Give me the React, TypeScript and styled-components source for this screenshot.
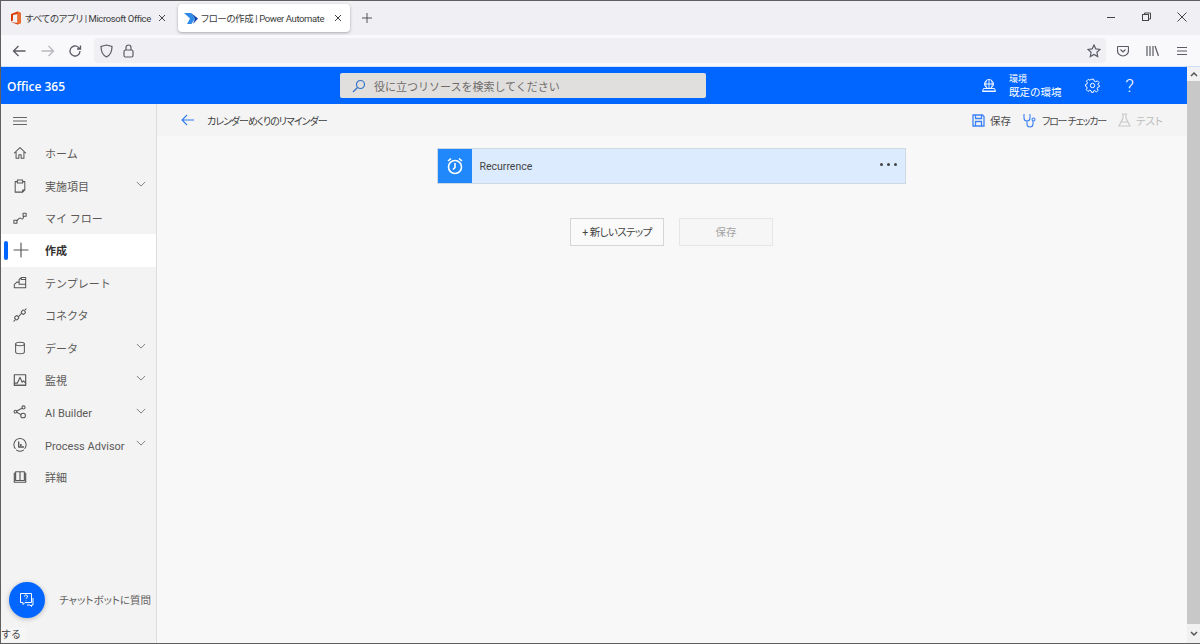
import React from "react";
import styled, { createGlobalStyle } from "styled-components";

const JP = `Roboto, "Noto Sans CJK JP", sans-serif`;

const Global = createGlobalStyle`
  html, body { margin: 0; padding: 0; height: 100%; overflow: hidden; }
  body { font-family: ${JP}; }
  * { box-sizing: border-box; }
  svg { flex: none; }
`;

const Win = styled.div`
  width: 1200px; height: 644px; display: flex; flex-direction: column;
  border-top: 1px solid #5f5f5f; border-left: 1px solid #5f5f5f; border-bottom: 1px solid #5f5f5f;
  background: #f8f8f8; overflow: hidden; position: relative; font-family: ${JP};
`;
const TabStrip = styled.div`
  height: 34px; flex: none; background: #f0f0f4; display: flex; align-items: flex-start; padding: 3px 0 0 0;
`;
const Tab = styled.div<{ $active?: boolean }>`
  height: 28px; width: ${(p) => (p.$active ? 172 : 177)}px; flex: none; display: flex; align-items: center;
  padding: 0 ${(p) => (p.$active ? 7 : 11)}px 0 ${(p) => (p.$active ? 6 : 9)}px;
  border-radius: 4px; background: ${(p) => (p.$active ? "#fff" : "transparent")};
  box-shadow: ${(p) => (p.$active ? "0 1px 3px rgba(0,0,0,.3)" : "none")};
  font-size: 9.5px; color: #3c3c3c;
`;
const TabTitle = styled.span`
  flex: 1; min-width: 0; margin-left: 3px; white-space: nowrap; letter-spacing: -0.4px; font-feature-settings: "palt";
`;
const WinBtns = styled.div`margin-left: auto; display: flex; align-items: center; height: 26px; gap: 24px; padding-right: 12px;`;
const PlusBtn = styled.div`width: 34px; height: 28px; display: flex; align-items: center; justify-content: center; color: #555;`;
const Toolbar = styled.div`
  height: 31px; flex: none; background: #f9f9fb; display: flex; align-items: center; padding-left: 11px; color: #5b5b66;
  border-bottom: 1px solid #cfe0fb; box-sizing: content-box;
`;
const NavGroup = styled.div`display: flex; gap: 13px; align-items: center; width: 82px;`;
const UrlBar = styled.div`
  width: 1012px; height: 25px; background: #f0f0f4; border-radius: 4px; display: flex; align-items: center;
  padding: 0 5px 0 6px; gap: 10px;
`;
const RightTools = styled.div`display: flex; align-items: center; gap: 17px; margin-left: 11px;`;
const Spacer = styled.div`flex: 1;`;
const Body = styled.div`flex: 1; display: flex; min-height: 0;`;
const Page = styled.div`flex: 1; display: flex; flex-direction: column; min-width: 0;`;
const Scrollbar = styled.div`
  width: 13px; flex: none; background: #f1f1f1; display: flex; flex-direction: column;
`;
const ScrollBtn = styled.div<{ $h: number }>`
  height: ${(p) => p.$h}px; flex: none; display: flex; align-items: center; justify-content: center;
`;
const ScrollTrack = styled.div`flex: 1; background: #c8c8c8;`;
const Header = styled.div`
  height: 37px; flex: none; background: #0066ff; color: #fff; display: flex; align-items: center; position: relative;
`;
const Brand = styled.div`
  width: 339px; padding: 2px 0 0 6px; font-size: 12px; font-weight: 600; font-family: "Open Sans", sans-serif;
`;
const Search = styled.div`
  width: 366px; height: 25px; background: #e1dfdd; border-radius: 2px; display: flex; align-items: center; padding: 0 0 0 12px;
  color: #6f6c6a; font-size: 11px; gap: 8px;
`;
const EnvIcon = styled.div`margin-left: 276px; display: flex; align-items: center;`;
const Env = styled.div`margin-left: 13px; display: flex; flex-direction: column; line-height: 13px; width: 65px;`;
const EnvLabel = styled.span`font-size: 9px;`;
const EnvName = styled.span`font-size: 10.5px;`;
const HeadIcon = styled.div`width: 37px; display: flex; justify-content: center; font-size: 19px; font-weight: 300; margin-top: -1px;`;
const Main = styled.div`flex: 1; display: flex; min-height: 0;`;
const Sidebar = styled.nav`
  width: 156px; flex: none; background: #f3f3f3; border-right: 1px solid #dddddd; display: flex; flex-direction: column; position: relative;
`;
const Burger = styled.div`height: 33px; display: flex; align-items: center; padding-left: 12px; color: #666;`;
const Item = styled.div<{ $active?: boolean }>`
  height: 32.4px; flex: none; display: flex; align-items: center; position: relative; padding-left: 12px;
  background: ${(p) => (p.$active ? "#fff" : "transparent")};
  color: ${(p) => (p.$active ? "#323130" : "#5c5a58")};
  font-size: 11px; font-weight: ${(p) => (p.$active ? 700 : 400)};
`;
const ActiveMark = styled.span`position: absolute; left: 3px; top: 7px; width: 4px; height: 19px; border-radius: 2px; background: #0066ff;`;
const ItemIcon = styled.span`width: 32px; flex: none; display: flex; align-items: center; color: #555;`;
const ItemLabel = styled.span<{ $latin?: boolean }>`
  flex: 1; white-space: nowrap; margin-top: ${(p) => (p.$latin ? 3 : 0)}px;
`;
const Chevron = styled.span`width: 20px; flex: none; color: #777; display: flex; margin-top: -3px;`;
const ChatFab = styled.div`
  position: absolute; left: 8px; top: 478px; width: 36px; height: 36px; border-radius: 50%; background: #0066ff;
  box-shadow: 0 1px 5px rgba(0,0,0,.25); display: flex; align-items: center; justify-content: center;
`;
const ChatLabel = styled.div`
  position: absolute; left: 58px; top: 490px; font-size: 10.5px; line-height: 14px; color: #605e5c; white-space: nowrap; font-feature-settings: "palt";
`;
const Status = styled.div`position: absolute; left: 0; top: 524px; padding-right: 5px; background: #f6f6f6; font-size: 10px; color: #444; line-height: 14px;`;
const Content = styled.div`flex: 1; display: flex; flex-direction: column; min-width: 0; background: #f8f8f8;`;
const CommandBar = styled.div`
  height: 32px; flex: none; background: #f4f4f4; display: flex; align-items: center; padding: 0 12px 0 24px; color: #444; font-size: 10px;
`;
const FlowTitle = styled.span`margin-left: 12px; color: #3f3f3f; font-size: 10px; letter-spacing: -1px; font-feature-settings: "palt";`;
const Cmd = styled.div<{ $disabled?: boolean; $tight?: boolean }>`
  display: flex; align-items: center; gap: 5px; color: ${(p) => (p.$disabled ? "#bdbdbd" : "#4a4a4a")};
  margin-right: 12px; font-size: ${(p) => (p.$tight ? 10 : 10.5)}px; letter-spacing: ${(p) => (p.$tight ? -1.2 : 0)}px;
  font-feature-settings: "palt";
`;
const Canvas = styled.div`flex: 1; display: flex; flex-direction: column; align-items: center; padding-top: 12px;`;
const Card = styled.div`
  width: 469px; height: 36px; background: #dcebfd; border: 1px solid #cfd9e4; display: flex; align-items: center; margin-right: 2px;
`;
const CardIcon = styled.div`width: 34px; height: 34px; background: #2088fa; display: flex; align-items: center; justify-content: center;`;
const CardTitle = styled.span`margin-left: 8px; flex: 1; font-size: 10.5px; color: #444;`;
const Dots = styled.div`display: flex; gap: 4px; padding-right: 8px; margin-top: -4px;`;
const Dot = styled.i`width: 3px; height: 3px; border-radius: 50%; background: #444; display: block;`;
const Actions = styled.div`display: flex; gap: 15px; margin-top: 34px; margin-right: 1px;`;
const Btn = styled.div<{ $disabled?: boolean; $tight?: boolean }>`
  width: 94px; height: 28px; display: flex; align-items: center; justify-content: center; font-size: 10.5px; padding-bottom: 2px;
  font-feature-settings: "palt"; letter-spacing: ${(p) => (p.$tight ? -0.6 : 0)}px;
  border: 1px solid ${(p) => (p.$disabled ? "#e6e6e6" : "#d6d6d6")};
  color: ${(p) => (p.$disabled ? "#a3a3a3" : "#444")}; background: ${(p) => (p.$disabled ? "#f6f6f6" : "#fafafa")};
`;

const Svg: React.FC<React.PropsWithChildren<{ s?: number; c?: string; w?: number }>> = ({ s = 14, c = "currentColor", w = 1.15, children }) => (
  <svg width={s} height={s} viewBox="0 0 16 16" fill="none" stroke={c} strokeWidth={w} strokeLinecap="round" strokeLinejoin="round">{children}</svg>
);
const Home = () => <Svg><path d="M1.500 8 8 1.800 14.500 8M3.500 6.500v7.500h3.200V10h2.600v4h3.200V6.500" /></Svg>;
const Clip = () => <Svg><path d="M4.500 3H2.500v12h8.500l2.500-2.500V3h-2M5 1.200h6V4.500H5zM11 15v-2.500h2.500" /></Svg>;
const Flow = () => <Svg><rect x="1" y="10.500" width="3.500" height="3.500" /><rect x="11.500" y="2.500" width="3.500" height="3.500" /><path d="M4.500 11 7 8.500a1.500 1.500 0 0 1 2 0l.5.3a1.500 1.500 0 0 0 2-.3l.8-2.500" /></Svg>;
const Plus = () => <Svg s={16}><path d="M8 1v14M1 8h14" /></Svg>;
const Tpl = () => <Svg><path d="M1.500 9.500 4.500 7H7V4l2.500-2.200H14.500V13.500H1.500zM7 7v2.500M7 9.500h7.500M9.500 1.800V4H14.500" /></Svg>;
const Conn = () => <Svg><rect x="2.200" y="9.200" width="4" height="4" rx="1" transform="rotate(-45 4.200 11.200)" /><rect x="9.800" y="2.800" width="4" height="4" rx="1" transform="rotate(-45 11.800 4.800)" /><path d="M6.200 9.800 9.800 6.200M1 15l1.500-1.500M15 1l-1.200 1.200" /></Svg>;
const Data = () => <Svg><ellipse cx="8" cy="3.500" rx="5" ry="2" /><path d="M3 3.500v9c0 1.100 2.200 2 5 2s5-.9 5-2v-9" /></Svg>;
const Mon = () => <Svg w={1.3}><rect x="1.500" y="2" width="13" height="12" /><path d="M1.500 11.500h3.500L8 5l2.500 5.500 1.500-1.500 2.500 2.500M1.500 14h13" /></Svg>;
const AI = () => <Svg><circle cx="2.800" cy="7.500" r="1.600" /><circle cx="12" cy="2.800" r="1.800" /><circle cx="11.500" cy="12" r="2.700" /><path d="M4.300 6.900 10.400 3.700M4.300 8.300 9 11" /></Svg>;
const PA = () => <Svg><path d="M2.500 12A7 7 0 1 1 13.500 12M4 13.800a7 7 0 0 0 8 0" /><path d="M6.500 4.500v5.800h5.500" strokeWidth="1.500" /><circle cx="9" cy="8" r=".6" /></Svg>;
const Book = () => <Svg w={1.3}><path d="M3 2h5v10H3zM8 2h5v10H8zM1.500 3.500V14h13V3.500" /></Svg>;
const Chev = () => <svg width="10" height="10" viewBox="0 0 12 12" fill="none" stroke="currentColor" strokeWidth="1.100"><path d="M1 3.500 6 8.500l5-5" /></svg>;

const navItems: { label: string; icon: React.ReactNode; chev?: boolean; active?: boolean; latin?: boolean }[] = [
  { label: "ホーム", icon: <Home /> },
  { label: "実施項目", icon: <Clip />, chev: true },
  { label: "マイ フロー", icon: <Flow /> },
  { label: "作成", icon: <Plus />, active: true },
  { label: "テンプレート", icon: <Tpl /> },
  { label: "コネクタ", icon: <Conn /> },
  { label: "データ", icon: <Data />, chev: true },
  { label: "監視", icon: <Mon />, chev: true },
  { label: "AI Builder", icon: <AI />, chev: true, latin: true },
  { label: "Process Advisor", icon: <PA />, chev: true, latin: true },
  { label: "詳細", icon: <Book /> },
];

export default function App() {
  return (
    <Win>
      <Global />
      <TabStrip>
        <Tab>
          <svg width="12" height="14" viewBox="0 0 12 14"><path d="M1 3 7.500 0.500 11 2v10l-3.500 1.500L1 11l6.500 1V3L3 4v5.500L1 10.500z" fill="#d83b01" /><path d="M7.500.5 11 2v10l-3.500 1.500z" fill="#eb6c2f" /></svg>
          <TabTitle>すべてのアプリ | Microsoft Office</TabTitle>
          <svg width="10" height="10" viewBox="0 0 10 10" stroke="#444"><path d="M2 2l6 6M8 2 2 8" /></svg>
        </Tab>
        <Tab $active>
          <svg width="14" height="11" viewBox="0 0 14 11"><path d="M0 0h7l4 5.500L7.500 11H3l3-5.500z" fill="#2f8be8" /><path d="M7 0l7 5.500L9 11l2-5.500z" fill="#0f3fa8" /></svg>
          <TabTitle>フローの作成 | Power Automate</TabTitle>
          <svg width="10" height="10" viewBox="0 0 10 10" stroke="#444"><path d="M2 2l6 6M8 2 2 8" /></svg>
        </Tab>
        <PlusBtn><svg width="12" height="12" viewBox="0 0 12 12" stroke="#555"><path d="M6 1v10M1 6h10" /></svg></PlusBtn>
        <WinBtns>
          <svg width="10" height="10" viewBox="0 0 10 10" stroke="#444"><path d="M1 5.500h8" /></svg>
          <svg width="12" height="10" viewBox="0 0 12 10" fill="none" stroke="#444"><rect x="2.500" y="2.500" width="6" height="6" /><path d="M4.500 2.500V1h6v6H8.500" /></svg>
          <svg width="12" height="12" viewBox="0 0 12 12" stroke="#444"><path d="M1.500 1.500l9 9M10.500 1.500l-9 9" /></svg>
        </WinBtns>
      </TabStrip>
      <Toolbar>
        <NavGroup>
          <svg width="15" height="14" viewBox="0 0 15 14" fill="none" stroke="#5b5b66" strokeWidth="1.300"><path d="M13.500 7h-12M6.500 2l-5 5 5 5" /></svg>
          <svg width="15" height="14" viewBox="0 0 15 14" fill="none" stroke="#b8b8be" strokeWidth="1.300"><path d="M1.500 7h12M8.500 2l5 5-5 5" /></svg>
          <svg width="14" height="14" viewBox="0 0 14 14" fill="none" stroke="#5b5b66" strokeWidth="1.300"><path d="M12 7a5 5 0 1 1-1.500-3.600L12.500 5M12.500 1.500V5H9" /></svg>
        </NavGroup>
        <UrlBar>
          <svg width="13" height="14" viewBox="0 0 13 14" fill="none" stroke="#5b5b66" strokeWidth="1.200"><path d="M6.500 1 12 2.500c0 5-1.500 8.500-5.500 10.500C2.500 11 1 7.500 1 2.500z" /></svg>
          <svg width="11" height="14" viewBox="0 0 11 14" fill="none" stroke="#5b5b66" strokeWidth="1.200"><rect x="1" y="6" width="9" height="7" rx="1.500" /><path d="M3 6V3.500a2.500 2.500 0 0 1 5 0V6" /></svg>
          <Spacer />
          <svg width="14" height="14" viewBox="0 0 14 14" fill="none" stroke="#5b5b66" strokeWidth="1.200"><path d="M7 1l1.800 3.900 4.200.5-3.100 2.900.8 4.200L7 10.400l-3.700 2.100.8-4.200L1 5.400l4.200-.5z" /></svg>
        </UrlBar>
        <RightTools>
          <svg width="12" height="12" viewBox="0 0 12 12" fill="none" stroke="#5b5b66" strokeWidth="1.200"><path d="M1 1.500h10a.5.500 0 0 1 .5.500v3.500a5.500 5.500 0 0 1-11 0V2a.5.500 0 0 1 .5-.5z" /><path d="M3.500 4.500 6 7l2.500-2.500" /></svg>
          <svg width="13" height="12" viewBox="0 0 13 12" stroke="#5b5b66" strokeWidth="1.200"><path d="M1 1v10M4 1v10M7 1v10M9 1l3.500 10" /></svg>
          <svg width="12" height="12" viewBox="0 0 12 12" stroke="#5b5b66" strokeWidth="1.200"><path d="M1 2.500h10M1 6h10M1 9.500h10" /></svg>
        </RightTools>
      </Toolbar>
      <Body>
        <Page>
          <Header>
            <Brand>Office 365</Brand>
            <Search>
              <svg width="14" height="14" viewBox="0 0 14 14" fill="none" stroke="#2f72c8" strokeWidth="1.200"><circle cx="8.500" cy="5.500" r="4" /><path d="M5.500 8.500 1 13" /></svg>
              役に立つリソースを検索してください
            </Search>
            <EnvIcon>
              <svg width="14" height="14" viewBox="0 0 14 14" fill="none" stroke="#fff" strokeWidth=".9"><circle cx="7" cy="5" r="4.500" /><path d="M2.500 5h9M7 .5v9M4.500 1.500c-1 2.500-1 5 0 7M9.500 1.500c1 2.500 1 5 0 7M.5 12h13M1.500 9.500h11l1 3h-13z" /></svg>
            </EnvIcon>
            <Env><EnvLabel>環境</EnvLabel><EnvName>既定の環境</EnvName></Env>
            <HeadIcon>
              <svg width="15" height="15" viewBox="0 0 24 24" fill="none" stroke="#fff" strokeWidth="1.600"><circle cx="12" cy="12" r="3.500" /><path d="M10 2h4l.7 3 2.300 1 2.700-1.500 2.800 2.800L20.500 10l.5 1 2 1v2l-2.500.7-1 2.300 1.500 2.700-2.800 2.800L15.500 20l-1.500.5-.7 2.500h-3L9.700 20.500 7.500 19.500 4.800 21.500 2 18.700 3.500 16l-1-2.300L.8 13v-2.500l2-.5 1-2.300L2.300 5l2.800-2.800L7.800 3.500 10 2z" /></svg>
            </HeadIcon>
            <HeadIcon>?</HeadIcon>
          </Header>
          <Main>
            <Sidebar>
              <Burger><svg width="14" height="10" viewBox="0 0 14 10" stroke="#666"><path d="M0 1.500h14M0 5h14M0 8.500h14" /></svg></Burger>
              {navItems.map((n) => (
                <Item key={n.label} $active={n.active}>
                  {n.active && <ActiveMark />}
                  <ItemIcon>{n.icon}</ItemIcon>
                  <ItemLabel $latin={n.latin}>{n.label}</ItemLabel>
                  {n.chev && <Chevron><Chev /></Chevron>}
                </Item>
              ))}
              <ChatFab>
                <svg width="16" height="16" viewBox="0 0 16 16" fill="none" stroke="#fff" strokeWidth="1"><path d="M1.500 1.500h11v9H6l-2 2v-2H1.500z" /><path d="M14 6v7h-1.500v1.500L11 13H8" /><path d="M5.500 4.500a1.500 1.500 0 1 1 2.200 1.300c-.5.300-.7.600-.7 1.200M7 8.500v.5" /></svg>
              </ChatFab>
              <ChatLabel>チャットボットに質問</ChatLabel>
              <Status>する</Status>
            </Sidebar>
            <Content>
              <CommandBar>
                <svg width="14" height="12" viewBox="0 0 14 12" fill="none" stroke="#2f7bf0" strokeWidth="1.100"><path d="M13 6H1M6 1 1 6l5 5" /></svg>
                <FlowTitle>カレンダーめくりのリマインダー</FlowTitle>
                <Spacer />
                <Cmd>
                  <svg width="13" height="13" viewBox="0 0 13 13" fill="none" stroke="#3b82f6" strokeWidth="1.300"><path d="M1 1h9.500L12 2.500V12H1zM3.500 1v3.500h6V1M3.500 12V7.500h6V12" /></svg>
                  保存
                </Cmd>
                <Cmd $tight>
                  <svg width="14" height="15" viewBox="0 0 14 15" fill="none" stroke="#3b82f6" strokeWidth="1.100"><path d="M1 1v4a3 3 0 0 0 6 0V1M4 8v3a3 3 0 0 0 6 0V8" /><circle cx="10.500" cy="6.500" r="1.500" /></svg>
                  フロー チェッカー
                </Cmd>
                <Cmd $disabled>
                  <svg width="13" height="14" viewBox="0 0 13 14" fill="none" stroke="#c8c8c8" strokeWidth="1.100"><path d="M4 1h5M5 1v4L1 13h11L8 5V1M3 9h7" /></svg>
                  テスト
                </Cmd>
              </CommandBar>
              <Canvas>
                <Card>
                  <CardIcon>
                    <svg width="18" height="18" viewBox="0 0 18 18" fill="none" stroke="#fff" strokeWidth="1.600"><circle cx="9" cy="10" r="6.500" /><path d="M9 6v4.500L7 12.500M2 4l3-2.500M16 4l-3-2.500" /></svg>
                  </CardIcon>
                  <CardTitle>Recurrence</CardTitle>
                  <Dots><Dot /><Dot /><Dot /></Dots>
                </Card>
                <Actions>
                  <Btn $tight>+ 新しいステップ</Btn>
                  <Btn $disabled>保存</Btn>
                </Actions>
              </Canvas>
            </Content>
          </Main>
        </Page>
        <Scrollbar>
          <ScrollBtn $h={14}><svg width="8" height="6" viewBox="0 0 8 6" fill="none" stroke="#555" strokeWidth="1.500"><path d="M1 5l3-3 3 3" /></svg></ScrollBtn>
          <ScrollTrack />
          <ScrollBtn $h={19}><svg width="8" height="6" viewBox="0 0 8 6" fill="none" stroke="#555" strokeWidth="1.500"><path d="M1 1l3 3 3-3" /></svg></ScrollBtn>
        </Scrollbar>
      </Body>
    </Win>
  );
}
